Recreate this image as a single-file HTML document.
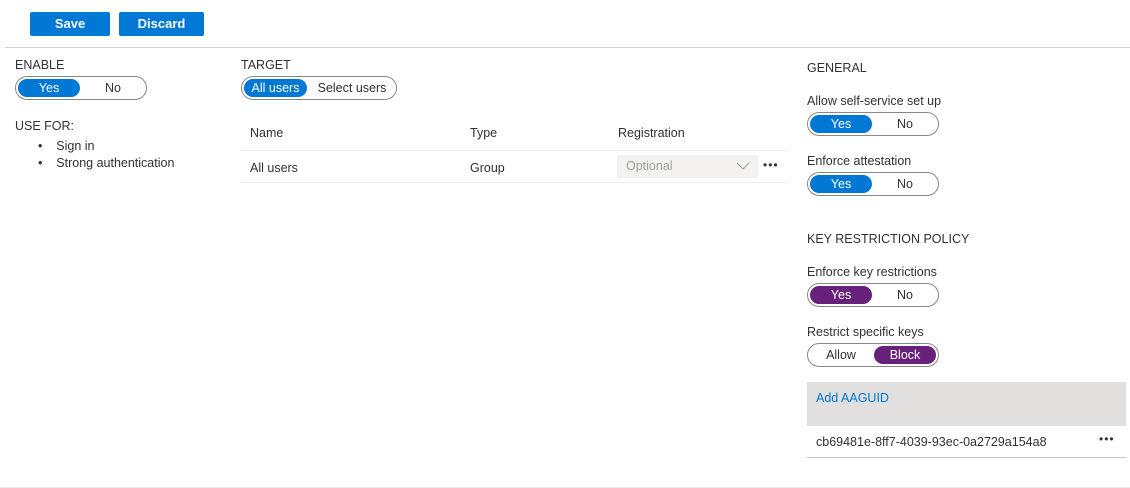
<!DOCTYPE html>
<html><head><style>
body{margin:0;width:1130px;height:488px;background:#fff;font-family:"Liberation Sans",sans-serif;font-size:12.5px;color:#323130;position:relative;overflow:hidden}
.a{position:absolute}
.btn{position:absolute;background:#0078d4;color:#fff;font-weight:bold;font-size:13px;text-align:center;line-height:24px;height:24px;border-radius:2px}
.tg{position:absolute;height:24px;border:1px solid #8a8886;border-radius:12px;box-sizing:border-box}
.tg span{position:absolute;top:2px;height:18px;line-height:18px;text-align:center;border-radius:9px;font-size:12.5px}
.on{background:#0078d4;color:#fff}
.pu{background:#68217a;color:#fff}
.hl{position:absolute;height:1px;background:#edebe9}
.dots{position:absolute;font-size:12px;letter-spacing:1px;color:#323130}
</style></head><body>
<div class="btn" style="left:30px;top:12px;width:80px">Save</div>
<div class="btn" style="left:119px;top:12px;width:85px">Discard</div>
<div class="hl" style="left:5px;top:47px;width:1125px;background:#d2d0ce"></div>

<div class="a" style="left:15px;top:58px">ENABLE</div>
<div class="tg" style="left:15px;top:76px;width:132px"><span class="on" style="left:2px;width:62px">Yes</span><span style="left:66px;width:62px">No</span></div>
<div class="a" style="left:15px;top:119px">USE FOR:</div>
<div class="a" style="left:38px;top:139px">•&nbsp;&nbsp;&nbsp;&nbsp;Sign in</div>
<div class="a" style="left:38px;top:156px">•&nbsp;&nbsp;&nbsp;&nbsp;Strong authentication</div>

<div class="a" style="left:241px;top:58px">TARGET</div>
<div class="tg" style="left:241px;top:76px;width:156px"><span class="on" style="left:2px;width:63px">All users</span><span style="left:68px;width:84px">Select users</span></div>
<div class="a" style="left:250px;top:126px">Name</div>
<div class="a" style="left:470px;top:126px">Type</div>
<div class="a" style="left:618px;top:126px">Registration</div>
<div class="hl" style="left:241px;top:150px;width:546px"></div>
<div class="a" style="left:250px;top:161px">All users</div>
<div class="a" style="left:470px;top:161px">Group</div>
<div class="a" style="left:617px;top:155px;width:141px;height:23px;background:#f3f2f1;border-radius:2px;color:#a19f9d;line-height:23px;text-indent:9px">Optional
<svg class="a" style="left:119px;top:7px" width="14" height="9"><path d="M1 1 L7 7 L13 1" fill="none" stroke="#a19f9d" stroke-width="1"/></svg></div>
<div class="dots" style="left:763px;top:158px">•••</div>
<div class="hl" style="left:241px;top:182px;width:546px"></div>

<div class="a" style="left:807px;top:61px">GENERAL</div>
<div class="a" style="left:807px;top:94px">Allow self-service set up</div>
<div class="tg" style="left:807px;top:112px;width:132px"><span class="on" style="left:2px;width:62px">Yes</span><span style="left:66px;width:62px">No</span></div>
<div class="a" style="left:807px;top:154px">Enforce attestation</div>
<div class="tg" style="left:807px;top:172px;width:132px"><span class="on" style="left:2px;width:62px">Yes</span><span style="left:66px;width:62px">No</span></div>
<div class="a" style="left:807px;top:232px">KEY RESTRICTION POLICY</div>
<div class="a" style="left:807px;top:265px">Enforce key restrictions</div>
<div class="tg" style="left:807px;top:283px;width:132px"><span class="pu" style="left:2px;width:62px">Yes</span><span style="left:66px;width:62px">No</span></div>
<div class="a" style="left:807px;top:325px">Restrict specific keys</div>
<div class="tg" style="left:807px;top:343px;width:132px"><span style="left:2px;width:62px">Allow</span><span class="pu" style="left:66px;width:62px">Block</span></div>

<div class="a" style="left:807px;top:382px;width:319px;height:44px;background:#e1dfdd"></div>
<div class="a" style="left:816px;top:391px;color:#0078d4">Add AAGUID</div>
<div class="a" style="left:816px;top:435px">cb69481e-8ff7-4039-93ec-0a2729a154a8</div>
<div class="dots" style="left:1099px;top:432px">•••</div>
<div class="hl" style="left:807px;top:457px;width:319px;background:#c8c6c4"></div>
<div class="hl" style="left:0;top:487px;width:1130px"></div>
</body></html>
